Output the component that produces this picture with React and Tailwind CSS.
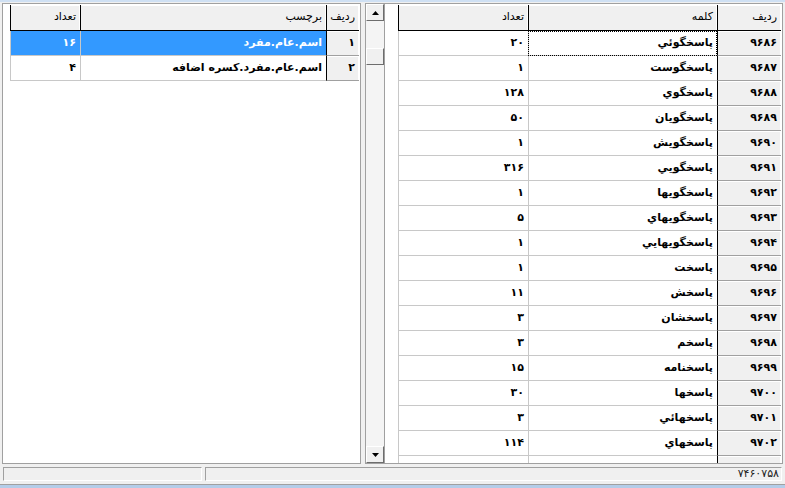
import React from "react";

const fa = (v) => String(v).replace(/\d/g, (d) => "۰۱۲۳۴۵۶۷۸۹"[d]);

const words = [
  [9686, "پاسخگوئي", 20],
  [9687, "پاسخگوست", 1],
  [9688, "پاسخگوي", 128],
  [9689, "پاسخگويان", 50],
  [9690, "پاسخگويش", 1],
  [9691, "پاسخگويي", 316],
  [9692, "پاسخگويها", 1],
  [9693, "پاسخگويهاي", 5],
  [9694, "پاسخگويهايي", 1],
  [9695, "پاسخت", 1],
  [9696, "پاسخش", 11],
  [9697, "پاسخشان", 3],
  [9698, "پاسخم", 3],
  [9699, "پاسخنامه", 15],
  [9700, "پاسخها", 30],
  [9701, "پاسخهائي", 3],
  [9702, "پاسخهاي", 114],
  ["", "", ""],
];

const tags = [
  [1, "اسم.عام.مفرد", 16],
  [2, "اسم.عام.مفرد.کسره اضافه", 4],
];

// rtl grid: every cell draws its line on the left and bottom
const fixedCell =
  "bg-[#f0f0f0] border-l border-l-black border-b shadow-[inset_-1px_1px_0_#fff] flex items-center justify-start pr-[4px] shrink-0 whitespace-nowrap";
const dataCell =
  "border-l border-l-[#c8c8c8] border-b border-b-[#c8c8c8] flex items-center justify-start pr-[4px] shrink-0 whitespace-nowrap";

function Arrow({ down }) {
  return (
    <svg width="7" height="4" viewBox="0 0 7 4">
      <path d={down ? "M0 0H7L3.5 4Z" : "M0 4H7L3.5 0Z"} fill="#000" />
    </svg>
  );
}

function ScrollButton({ down }) {
  return (
    <div className="h-[17px] bg-[#f0f0f0] border border-t-white border-l-white border-r-[#6d6d6d] border-b-[#6d6d6d] flex items-center justify-center shrink-0">
      <Arrow down={down} />
    </div>
  );
}

export default function App() {
  return (
    <div className="w-[785px] h-[488px] bg-[#f0f0f0] flex flex-col overflow-hidden font-['DejaVu_Sans',sans-serif] text-[11px] text-black">
      <div className="h-[2px] bg-[#cfe0f3] shrink-0" />
      <div className="h-[1px] shrink-0" />

      <div className="h-[461px] flex pl-[2px] shrink-0">
        {/* left grid: tags */}
        <div className="w-[359px] border border-[#a0a0a0] bg-white overflow-hidden pt-[1px] pr-[1px]">
          <div className="flex h-[26px]" dir="rtl">
            <div className={fixedCell + " w-[33px] border-b-black pr-[2px]"}>ردیف</div>
            <div className={fixedCell + " w-[246px] border-b-black"}>برچسب</div>
            <div className={fixedCell + " w-[70px] border-b-black"}>تعداد</div>
          </div>
          {tags.map((t, i) => (
            <div key={i} className="flex h-[25px] font-bold" dir="rtl">
              <div className={fixedCell + " w-[33px] border-b-[#a0a0a0]"}>{fa(t[0])}</div>
              <div className={dataCell + " w-[246px] " + (i === 0 ? "bg-[#3399ff] text-white" : "")}>{t[1]}</div>
              <div className={dataCell + " w-[70px] " + (i === 0 ? "bg-[#3399ff] text-white" : "")}>{fa(t[2])}</div>
            </div>
          ))}
        </div>

        <div className="w-[4px] shrink-0" />

        {/* right grid: words with scrollbar on the left (rtl) */}
        <div className="w-[418px] border border-[#a0a0a0] flex overflow-hidden">
          <div className="w-[19px] flex flex-col bg-[#f4f4f4] border-r border-r-[#a0a0a0] shrink-0">
            <ScrollButton />
            <div className="h-[27px] shrink-0" />
            <div className="h-[17px] bg-[#f0f0f0] border border-t-white border-l-white border-r-[#6d6d6d] border-b-[#6d6d6d] shrink-0" />
            <div className="flex-1" />
            <ScrollButton down />
          </div>
          <div className="flex-1 bg-white overflow-hidden pt-[1px] pr-[1px]">
            <div className="flex h-[26px]" dir="rtl">
              <div className={fixedCell + " w-[64px] border-b-black"}>ردیف</div>
              <div className={fixedCell + " w-[189px] border-b-black"}>کلمه</div>
              <div className={fixedCell + " w-[130px] border-b-black"}>تعداد</div>
            </div>
            {words.map((w, i) => (
              <div key={i} className="flex h-[25px] font-bold" dir="rtl">
                <div className={fixedCell + " w-[64px] border-b-[#a0a0a0]"}>{fa(w[0])}</div>
                <div
                  className={
                    dataCell +
                    " w-[189px] " +
                    (i === 0 ? "outline-1 outline-dotted outline-black -outline-offset-1" : "")
                  }
                >
                  {w[1]}
                </div>
                <div className={dataCell + " w-[130px]"}>{fa(w[2])}</div>
              </div>
            ))}
          </div>
        </div>
      </div>

      {/* status bar */}
      <div className="h-[20px] flex gap-[3px] px-[3px] pt-[3px] pb-[3px] shrink-0">
        <div className="w-[199px] border border-t-[#a0a0a0] border-l-[#a0a0a0] border-r-white border-b-white" />
        <div className="flex-1 border border-t-[#a0a0a0] border-l-[#a0a0a0] border-r-white border-b-white flex items-center justify-end pr-[2px] text-[#222]">
          {fa("7460758")}
        </div>
      </div>
      <div className="h-[1px] bg-[#a0a0a0] shrink-0" />
      <div className="h-[3px] bg-[#b4cde9] shrink-0" />
    </div>
  );
}
